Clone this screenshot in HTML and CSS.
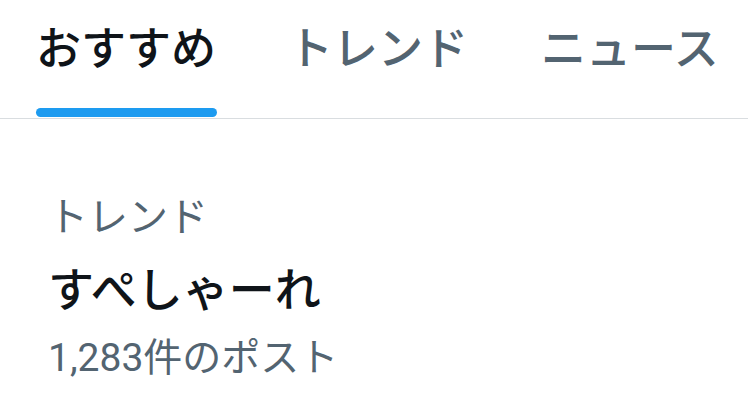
FILE: index.html
```html
<!DOCTYPE html>
<html lang="ja">
<head>
    <meta charset="UTF-8">
    <meta name="viewport" content="width=device-width, initial-scale=1.0">
    <title>おすすめ</title>
    <link rel="stylesheet" href="styles.css">
</head>
<body>
    <nav class="tabs">
        <div class="tab active"><span class="tab-text">おすすめ</span></div>
        <div class="tab"><span class="tab-text">トレンド</span></div>
        <div class="tab"><span class="tab-text">ニュース</span></div>
    </nav>

    <div class="trend">
        <div class="trend-label">トレンド</div>
        <div class="trend-name">すぺしゃーれ</div>
        <div class="trend-count">1,283件のポスト</div>
    </div>
</body>
</html>
```

FILE: styles.css
```css
body {
    margin: 0;
    background: #fff;
    font-family: "Noto Sans CJK JP", "Noto Sans", sans-serif;
    color: #0f1419;
    overflow: hidden;
}

.tabs {
    display: flex;
    border-bottom: 1px solid #d9dde0;
    white-space: nowrap;
}

.tab {
    flex: 0 0 252px;
    display: flex;
    justify-content: center;
    font-size: 45px;
    line-height: 60px;
    font-weight: 500;
    color: #536471;
}

.tab-text {
    position: relative;
    padding-top: 16px;
    padding-bottom: 42px;
}

.tab.active {
    color: #0f1419;
}

.tab.active .tab-text::after {
    content: "";
    position: absolute;
    left: 0;
    right: -1px;
    bottom: 1px;
    height: 9px;
    border-radius: 5px;
    background: #1d9bf0;
}

.trend {
    padding: 70px 0 0 48px;
}

.trend-label {
    font-size: 40px;
    line-height: 50px;
    color: #536471;
}

.trend-name {
    margin-top: 18px;
    font-size: 46px;
    line-height: 58px;
    font-weight: 500;
}

.trend-count {
    margin-top: 18px;
    font-family: Roboto, "Noto Sans CJK JP", sans-serif;
    font-size: 39px;
    line-height: 50px;
    color: #536471;
}
```
